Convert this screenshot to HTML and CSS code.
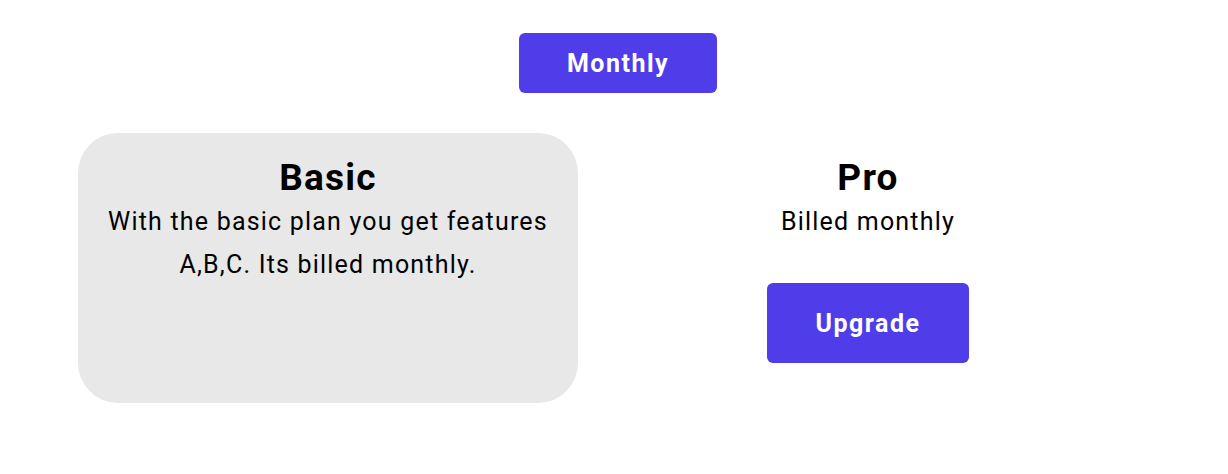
FILE: index.html
```html
<!DOCTYPE html>
<html lang="en">
<head>
<meta charset="utf-8">
<title>Pricing</title>
<link rel="stylesheet" href="styles.css">
</head>
<body>
<div class="page">
  <div class="toggle-row">
    <button class="btn btn-toggle">Monthly</button>
  </div>
  <div class="plans">
    <div class="plan plan-basic">
      <h2 class="plan-title">Basic</h2>
      <p class="plan-text">With the basic plan you get features A,B,C. Its billed monthly.</p>
    </div>
    <div class="plan plan-pro">
      <h2 class="plan-title">Pro</h2>
      <p class="plan-text">Billed monthly</p>
      <button class="btn btn-upgrade">Upgrade</button>
    </div>
  </div>
</div>
</body>
</html>
```
FILE: styles.css
```css
html, body {
  margin: 0;
  padding: 0;
  background: #ffffff;
}
body {
  font-family: Roboto, "Liberation Sans", Arial, sans-serif;
  color: #000000;
  width: 1228px;
  height: 474px;
  overflow: hidden;
}
.page {
  width: 1080px;
  margin-left: 78px;
  padding-top: 33px;
}
.toggle-row {
  display: flex;
  justify-content: center;
}
.btn {
  border: none;
  background: #4f3dea;
  color: #ffffff;
  font-family: inherit;
  font-weight: 700;
  font-size: 25px;
  letter-spacing: 1.5px;
  border-radius: 6px;
  display: flex;
  align-items: center;
  justify-content: center;
  padding: 0;
  cursor: pointer;
}
.btn-toggle {
  width: 198px;
  height: 60px;
}
.plans {
  display: grid;
  grid-template-columns: 500px 500px;
  column-gap: 40px;
  margin-top: 40px;
}
.plan {
  height: 270px;
  box-sizing: border-box;
  padding: 22px 20px 0;
  display: flex;
  flex-direction: column;
  align-items: center;
  text-align: center;
}
.plan-basic {
  background: #e8e8e8;
  border-radius: 40px;
}
.plan-title {
  margin: 0;
  font-size: 37px;
  line-height: 45px;
  font-weight: 700;
  letter-spacing: 1.2px;
}
.plan-text {
  margin: 0;
  font-size: 25px;
  line-height: 43px;
  font-weight: 400;
  letter-spacing: 1.2px;
}
.btn-upgrade {
  width: 202px;
  height: 80px;
  margin-top: 40px;
}
```
